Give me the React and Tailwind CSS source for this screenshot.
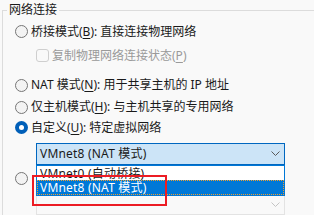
import React from "react";

function Radio({ checked }) {
  if (checked) {
    return (
      <span className="w-[13px] h-[13px] rounded-full bg-[#005fb8] flex items-center justify-center shrink-0">
        <span className="w-[5px] h-[5px] rounded-full bg-white" />
      </span>
    );
  }
  return <span className="w-[13px] h-[13px] rounded-full border border-[#767676] bg-[#f3f3f3] shrink-0" />;
}

function Chevron({ color }) {
  return (
    <svg width="9" height="5" viewBox="0 0 9 5" className="shrink-0">
      <polyline points="0.5,0.5 4.5,4.5 8.5,0.5" fill="none" stroke={color} strokeWidth="1" />
    </svg>
  );
}

function U({ children }) {
  return <span className="underline underline-offset-[2px]">{children}</span>;
}

export default function App() {
  return (
    <div className="w-[314px] h-[215px] overflow-hidden bg-[#f9f9f9] text-[12px] text-[#1a1a1a] font-['Noto_Sans','Noto_Sans_CJK_SC',sans-serif] pt-[10px] pl-[2px]">
      <div className="relative border-l border-t border-[#dcdcdc] h-[205px] flex flex-col pl-[12px]">
        <span className="absolute top-[-9px] left-[4px] px-[2px] bg-[#f9f9f9] leading-[16px]">网络连接</span>

        <div className="mt-[11px] h-[20px] flex items-center gap-[3px] leading-[16px]">
          <Radio />
          <span>桥接模式(<U>B</U>): 直接连接物理网络</span>
        </div>

        <div className="mt-[5px] h-[20px] flex items-center gap-[3px] pl-[21px] leading-[16px] text-[#9a9a9a]">
          <span className="w-[13px] h-[13px] rounded-[3px] border border-[#cfcfcf] bg-[#f9f9f9] shrink-0" />
          <span>复制物理网络连接状态(<U>P</U>)</span>
        </div>

        <div className="mt-[10px] h-[20px] flex items-center gap-[3px] leading-[16px]">
          <Radio />
          <span>NAT 模式(<U>N</U>): 用于共享主机的 IP 地址</span>
        </div>

        <div className="mt-[3px] h-[20px] flex items-center gap-[3px] leading-[16px]">
          <Radio />
          <span>仅主机模式(<U>H</U>): 与主机共享的专用网络</span>
        </div>

        <div className="mt-[1px] h-[20px] flex items-center gap-[3px] leading-[16px]">
          <Radio checked />
          <span>自定义(<U>U</U>): 特定虚拟网络</span>
        </div>

        <div className="relative z-10 mt-[6px] ml-[21px] w-[249px] h-[22px] border border-[#0067c0] bg-[#cce4f7] flex items-center justify-between pl-[3px] pr-[4px] leading-[16px] tracking-[0.2px]">
          <span>VMnet8 (NAT 模式)</span>
          <Chevron color="#5a5a5a" />
          <div className="absolute left-[-1px] top-[21px] w-[249px] border border-[#0078d7] bg-white flex flex-col">
            <div className="h-[14px] pl-[3px] flex items-center leading-[14px] pt-[1px]">VMnet0 (自动桥接)</div>
            <div className="h-[15px] pl-[2px] flex items-center leading-[14px] bg-[#0078d7] text-white border border-dotted border-[#f0a030]">VMnet8 (NAT 模式)</div>
          </div>
          <div className="absolute left-[-5px] top-[31px] w-[135px] h-[31px] border-2 border-[#ec1c24]" />
        </div>

        <div className="mt-[4px] h-[20px] flex items-center">
          <Radio />
        </div>

        <div className="mt-[6px] ml-[21px] w-[249px] h-[22px] border border-[#e3e3e3] bg-[#f9f9f9] flex items-center justify-end pr-[4px]">
          <Chevron color="#c4c4c4" />
        </div>
      </div>
    </div>
  );
}
